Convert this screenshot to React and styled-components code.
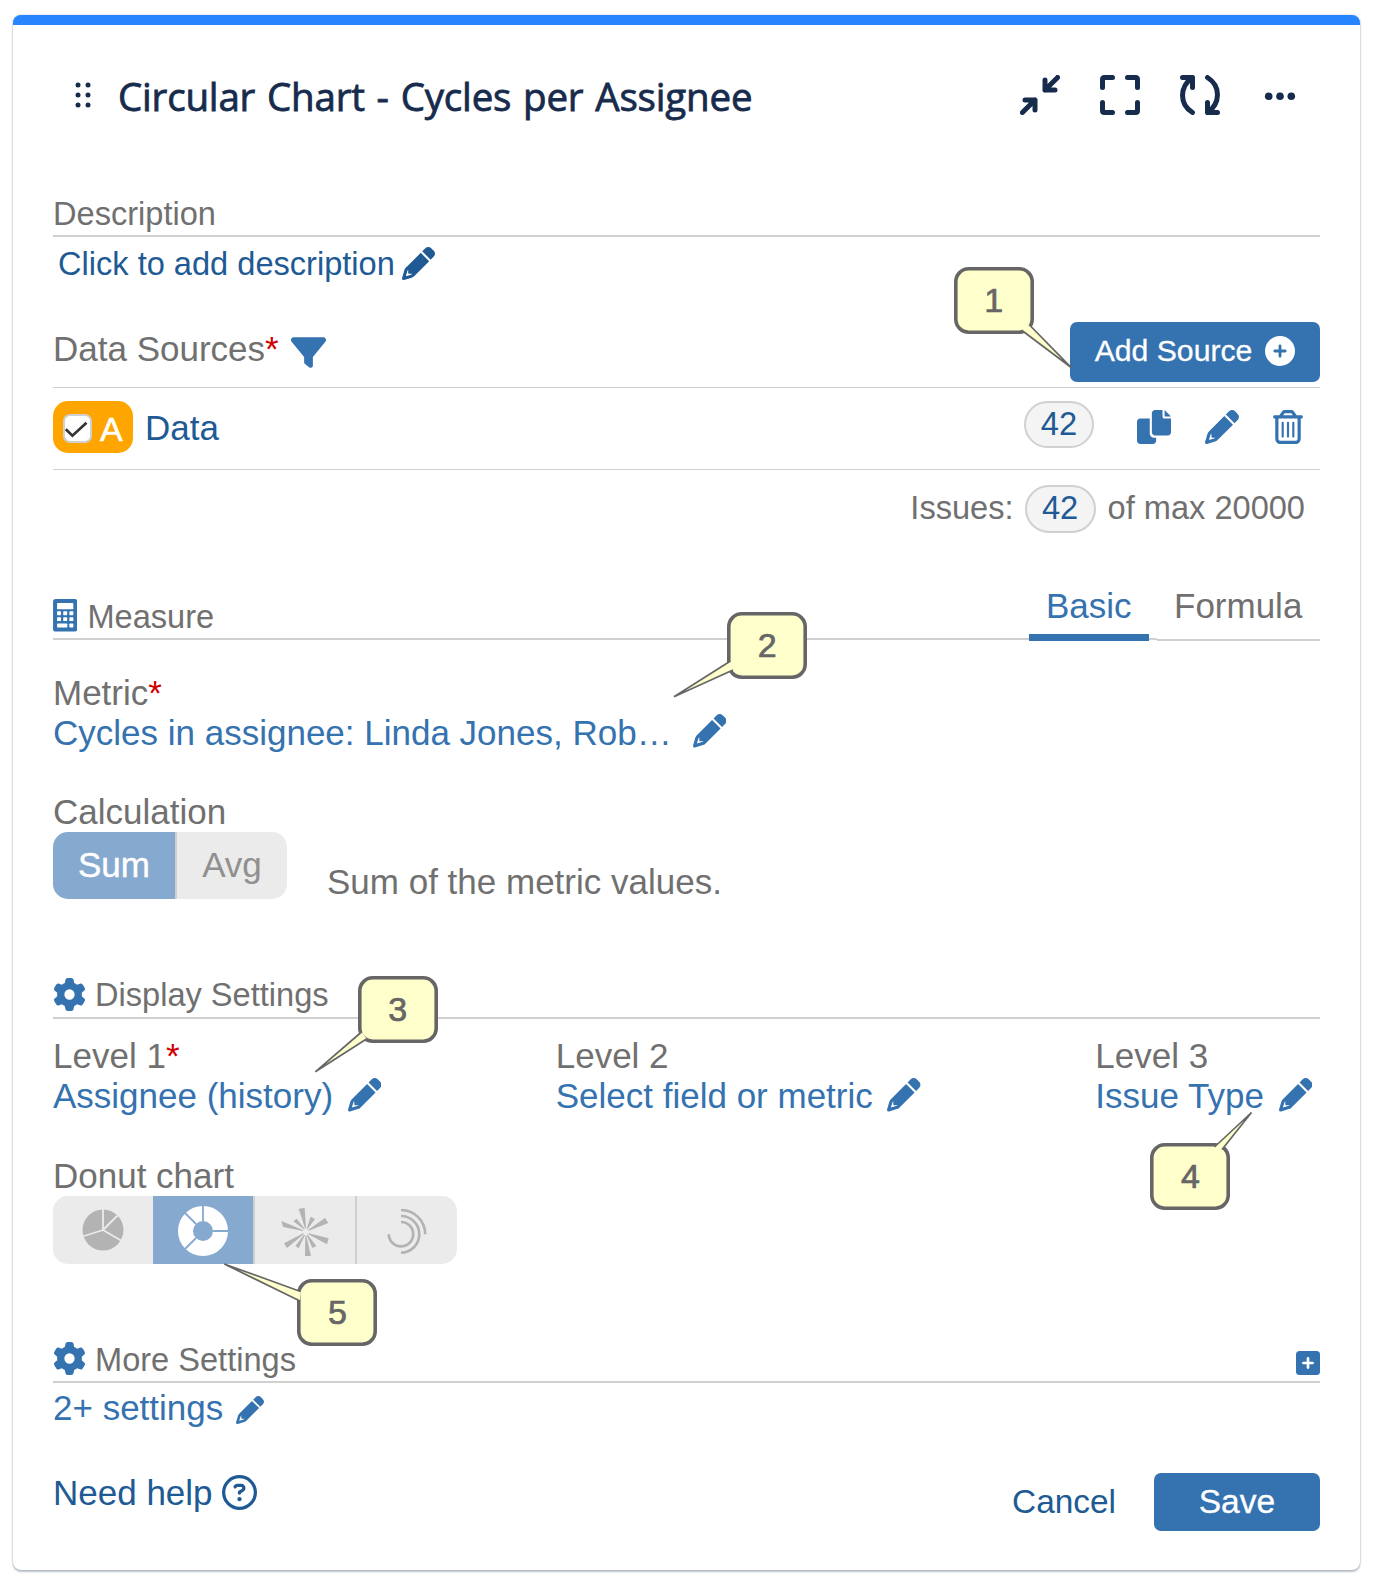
import React from "react"

// Libraries
import styled, { createGlobalStyle, css } from "styled-components"
import {
  FaCirclePlus,
  FaGear,
  FaRegCircleQuestion,
  FaRegTrashCan,
} from "react-icons/fa6"

const colors = {
  bar: "#2684ff",
  navy: "#172b4d",
  gray: "#707070",
  blue: "#3572b0",
  darkBlue: "#205a94",
  line: "#d0d0d0",
  red: "#d00000",
  orange: "#ffa500",
  segment: "#ebebeb",
  segmentActive: "#86a9cf",
  segmentIcon: "#b3b3b3",
  note: "#ffffcc",
  noteBorder: "#666666",
}

const GlobalStyle = createGlobalStyle`
  * {
    box-sizing: border-box;
  }

  body {
    margin: 0;
    background: #ffffff;
    font-family: "Liberation Sans", Arial, sans-serif;
    color: ${colors.gray};
  }

  svg {
    display: block;
    flex: none;
  }
`

const Page = styled.div`
  position: relative;
  height: 1586px;
  padding: 15px 13px 0;
  overflow: hidden;
`

const Card = styled.main`
  height: 1555px;
  padding: 0 40px;
  border-top: 10px solid ${colors.bar};
  border-radius: 8px;
  background: #ffffff;
  box-shadow: 0 2px 2px rgba(9, 30, 66, 0.25), 0 0 2px rgba(9, 30, 66, 0.31);
`

const Header = styled.header`
  display: flex;
  align-items: center;
  height: 169px;
  padding: 50px 20px 79px 22px;
  color: ${colors.navy};
`

const Title = styled.h1`
  flex: 1;
  margin: 2px 0 0 27px;
  font: 500 38.5px/40px "Open Sans", "Noto Sans", sans-serif;
  letter-spacing: -0.18px;
  word-spacing: 2px;
  white-space: nowrap;
  -webkit-text-stroke: 0.8px ${colors.navy};
`

const HeaderActions = styled.div`
  display: flex;
  gap: 40px;
`

const textStyles = css`
  font-size: ${({ $compact }) => ($compact ? "32.6px" : "35px")};
  line-height: ${({ $compact }) => ($compact ? "39px" : "40px")};
  white-space: nowrap;
`

const Label = styled.div`
  ${textStyles}
`

const Required = styled.span`
  color: ${colors.red};
`

const Link = styled.a`
  ${textStyles}
  display: flex;
  align-items: flex-start;
  color: ${({ $dark }) => ($dark ? colors.darkBlue : colors.blue)};

  svg {
    margin-top: ${({ $iconTop }) => $iconTop || 2}px;
    margin-left: ${({ $iconGap }) => $iconGap || 14.5}px;
  }
`

const SectionHead = styled.div`
  display: flex;
  align-items: flex-start;
  height: ${({ $height }) => $height}px;
  margin-top: ${({ $top }) => $top || 0}px;
  border-bottom: 2px solid ${colors.line};

  > svg {
    margin: ${({ $height }) => $height - 41}px 9px 0 0;
  }

  ${Label} {
    flex: 1;
  }
`

const Expander = styled.span`
  margin-top: 10.5px;
`

const DescriptionRow = styled.div`
  display: flex;
  margin: 7px 0 39px;
  padding-left: 5px;
`

const SourcesHead = styled.div`
  display: flex;
  align-items: flex-start;
  height: 66px;
  border-bottom: 1px solid ${colors.line};

  > ${Label} {
    margin: 7px 12px 0 0;
  }

  > svg {
    margin-top: 13px;
  }
`

const Button = styled.button`
  display: flex;
  align-items: center;
  justify-content: center;
  gap: 13px;
  width: ${({ $width }) => $width}px;
  height: ${({ $height }) => $height}px;
  margin-left: auto;
  padding: 0 0 ${({ $lift }) => $lift || 0}px;
  border: 0;
  border-radius: 7px;
  background: ${colors.blue};
  color: #ffffff;
  font-family: inherit;
  font-size: ${({ $size }) => $size}px;
  white-space: nowrap;
  -webkit-text-stroke: 0.3px #ffffff;
`

const SourceRow = styled.div`
  display: flex;
  align-items: flex-start;
  height: 82px;
  padding: 13px 15px 0 0;
  border-bottom: 1px solid ${colors.line};

  > a {
    margin: 7px auto 0 12px;
  }
`

const SourceTag = styled.div`
  display: flex;
  align-items: center;
  gap: 8px;
  width: 80px;
  height: 52px;
  padding-left: 10px;
  border-radius: 15px;
  background: ${colors.orange};
  color: #ffffff;
  font-size: 34px;
  line-height: 40px;
  -webkit-text-stroke: 0.5px #ffffff;
`

const Checkbox = styled.span`
  width: 29px;
  height: 29px;
  margin-top: 3px;
  border: 2px solid ${colors.line};
  border-radius: 7px;
  background: #ffffff;

  svg {
    margin: -2px;
  }
`

const TagLetter = styled.span`
  margin-top: 3px;
`

const Count = styled.span`
  width: ${({ $width }) => $width}px;
  height: ${({ $width }) => ($width > 70 ? 48 : 47)}px;
  border: 2px solid ${colors.line};
  border-radius: 24px;
  background: #f4f4f4;
  color: ${colors.darkBlue};
  font-size: 32.7px;
  line-height: 42px;
  text-align: center;
`

const SourceActions = styled.div`
  display: flex;
  gap: 34px;
  margin: 9px 0 0 43px;
  color: ${colors.blue};

  svg:last-child {
    margin-left: -2px;
  }
`

const IssuesRow = styled.div`
  display: flex;
  justify-content: flex-end;
  margin-top: 15px;
  padding-right: 15px;

  ${Label} {
    margin-top: 3px;
  }

  ${Count} {
    margin: 0 12px 0 11px;
  }
`

const MeasureRow = styled.div`
  display: flex;
  align-items: flex-start;
  height: 55px;
  margin: 53px 0 32px;
`

const MeasureTitle = styled.div`
  display: flex;
  flex: 1;
  height: 54px;
  padding-top: 11px;
  border-bottom: 2px solid ${colors.line};

  svg {
    margin: 2px 10px 0 0;
  }
`

const Tab = styled.div`
  ${textStyles}
  width: ${({ $active }) => ($active ? 120 : 163)}px;
  height: 55px;
  padding-left: 17px;
  border-bottom: ${({ $active }) =>
    $active ? `7px solid ${colors.blue}` : `2px solid ${colors.line}`};
  color: ${({ $active }) => ($active ? colors.blue : colors.gray)};
`

const TabGap = styled.div`
  width: 8px;
  height: 54px;
  border-bottom: 2px solid ${colors.line};
`

const Field = styled.div`
  margin-top: ${({ $top }) => $top || 0}px;
`

const CalculationRow = styled.div`
  display: flex;
  align-items: flex-start;
  height: 67px;

  > ${Label} {
    margin: 30px 0 0 40px;
  }
`

const Segments = styled.div`
  display: flex;
  width: max-content;
  height: ${({ $height }) => $height}px;
  border-radius: 15px;
  overflow: hidden;
`

const Segment = styled.div`
  display: flex;
  align-items: center;
  justify-content: center;
  box-sizing: content-box;
  width: ${({ $width }) => $width}px;
  padding-bottom: 2px;
  border-left: ${({ $divider }) => ($divider ? `2px solid ${colors.line}` : 0)};
  background: ${({ $active }) =>
    $active ? colors.segmentActive : colors.segment};
  color: ${({ $active }) => ($active ? "#ffffff" : "#909090")};
  font-size: 35px;
  -webkit-text-stroke: ${({ $active }) => ($active ? "0.4px #ffffff" : "0")};

  svg {
    margin-top: 4px;
  }
`

const Levels = styled.div`
  display: flex;
  justify-content: space-between;
  margin-top: 17px;
  padding-right: 8px;
`

const Footer = styled.footer`
  display: flex;
  align-items: flex-start;
  margin-top: 45px;
`

const Cancel = styled.a`
  margin: 9px 38px 0 auto;
  color: ${colors.darkBlue};
  font-size: 33.4px;
  line-height: 40px;

  & + ${Button} {
    margin-left: 0;
  }
`

const Note = styled.div`
  position: absolute;
  top: ${({ $y }) => $y}px;
  left: ${({ $x }) => $x}px;
  width: 80px;
  height: 67px;
  color: ${colors.noteBorder};
  font-size: 34px;
  line-height: 66px;
  text-align: center;
  -webkit-text-stroke: 0.7px ${colors.noteBorder};

  svg {
    position: absolute;
    inset: 0;
    overflow: visible;
  }

  span {
    position: relative;
  }
`

// Icons
const PencilIcon = ({ size = 33.5 }) => (
  <svg width={size} height={size} viewBox="0 0 512 512" fill="currentColor">
    <path d="M421.7 220.3L188.5 453.4L154.6 419.5L158.1 416H112C103.2 416 96 408.8 96 400V353.9L92.51 357.4C87.78 362.2 84.31 368 82.42 374.4L59.44 452.6L137.6 429.6C143.1 427.7 149.8 424.2 154.6 419.5L188.5 453.4C178.1 463.8 165.2 471.5 151.1 475.6L30.77 511C22.35 513.5 13.24 511.2 7.03 504.1C.82 498.8-1.5 489.7 .98 481.2L36.37 360.9C40.53 346.8 48.16 333.9 58.57 323.5L291.7 90.34L421.7 220.3zM492.7 58.75C517.7 83.74 517.7 124.3 492.7 149.3L444.3 197.7L314.3 67.72L362.7 19.32C387.7-5.68 428.3-5.68 453.3 19.32L492.7 58.75z" />
  </svg>
)

const CopyIcon = () => (
  <svg width="34" height="34" viewBox="0 0 512 512" fill="currentColor">
    <path d="M384 96L384 0h-112c-26.51 0-48 21.49-48 48v288c0 26.51 21.49 48 48 48H464c26.51 0 48-21.49 48-48V128h-95.1C398.4 128 384 113.6 384 96zM416 0v96h96L416 0zM192 352V128h-144c-26.51 0-48 21.49-48 48v288c0 26.51 21.49 48 48 48h192c26.51 0 48-21.49 48-48L288 416h-32C220.7 416 192 387.3 192 352z" />
  </svg>
)

const FilterIcon = () => (
  <svg width="35" height="35" viewBox="0 0 512 512" fill={colors.blue}>
    <path d="M3.85 54.87C10.47 40.9 24.54 32 40 32H472C487.5 32 501.5 40.9 508.1 54.87C514.8 68.84 512.7 85.37 502.1 97.33L320 320.9V448C320 460.1 313.2 471.2 302.3 476.6C291.5 482 278.5 480.9 268.8 473.6L204.8 425.6C196.7 419.6 192 410.1 192 400V320.9L9.04 97.33C-.75 85.37-2.77 68.84 3.85 54.87z" />
  </svg>
)

const CalculatorIcon = () => (
  <svg width="24.4" height="32.6" viewBox="0 0 73 98">
    <rect width="73" height="98" rx="8" fill={colors.blue} />
    <g fill="#ffffff">
      <rect x="12" y="12" width="49" height="19" rx="2" />
      {[37, 55].map(y =>
        [12, 30.5, 49].map(x => (
          <rect key={`${x}-${y}`} x={x} y={y} width="12" height="11.5" rx="2" />
        ))
      )}
      <rect x="12" y="74" width="31" height="11.5" rx="2" />
      <rect x="49" y="74" width="12" height="11.5" rx="2" />
    </g>
  </svg>
)

const PlusSquareIcon = () => (
  <svg width="24" height="24" viewBox="0 0 24 24">
    <rect width="24" height="24" rx="3.5" fill={colors.blue} />
    <path
      d="M12 7.4v9.2M7.4 12h9.2"
      stroke="#ffffff"
      strokeWidth="2.7"
      strokeLinecap="round"
    />
  </svg>
)

const DragIcon = () => (
  <svg width="16" height="26" viewBox="0 0 16 26" fill="currentColor">
    {[3, 13].map(x =>
      [3, 13, 23].map(y => <circle key={`${x}-${y}`} cx={x} cy={y} r="2.5" />)
    )}
  </svg>
)

const StrokeIcon = ({ d }) => (
  <svg
    width="40"
    height="40"
    viewBox="0 0 40 40"
    fill="none"
    stroke="currentColor"
    strokeWidth="5"
    strokeLinecap="round"
    strokeLinejoin="round"
  >
    <path d={d} />
  </svg>
)

const MoreIcon = () => (
  <svg width="40" height="40" viewBox="0 0 40 40" fill="currentColor">
    <circle cx="8.7" cy="21.3" r="3.8" />
    <circle cx="20" cy="21.3" r="3.8" />
    <circle cx="31.3" cy="21.3" r="3.8" />
  </svg>
)

const PieIcon = () => (
  <svg width="50" height="50" viewBox="0 0 50 50">
    <circle cx="25" cy="24" r="20.5" fill={colors.segmentIcon} />
    <path
      d="M25 24V3M25 24L39.5 9.5M25 24L43 34.5M25 24L4.5 30.5"
      stroke={colors.segment}
      strokeWidth="1.8"
    />
  </svg>
)

const DonutIcon = () => (
  <svg width="50" height="50" viewBox="0 0 50 50">
    <circle cx="25" cy="25" r="17.5" fill="none" stroke="#ffffff" strokeWidth="15" />
    <path
      d="M25 15V0M35 25H50M18 32L6 44M18 18L6 6"
      stroke={colors.segmentActive}
      strokeWidth="1.8"
    />
  </svg>
)

const BurstIcon = () => (
  <svg width="50" height="50" viewBox="-78 -77 150 150" fill={colors.segmentIcon}>
    <path d="M-22-69L-4-71L0-10L-3-10zM14-45L27-38L5-8L2-9zM57-41L67-26L8-3L7-6zM68 20L63 38L7 8L8 5zM31 43L19 49L2 10L5 9zM15 73L-3 75L-2 12L1 12zM-22 50L-32 43L-6 9L-3 10zM-57 49L-66 35L-8 5L-7 8zM-69-14L-74-32L-9-5L-8-2zM-38-31L-28-39L-4-9L-6-7z" />
  </svg>
)

const RadialIcon = () => (
  <svg width="50" height="50" viewBox="0 0 50 50" fill="none" stroke={colors.segmentIcon} strokeWidth="2.7">
    <path d="M19 4A24.2 24.2 0 0 1 43.2 28.2M19 10A18.3 18.3 0 0 1 19 46.6M19 16A12.2 12.2 0 1 1 6.8 28.2" />
  </svg>
)

// Numbered bubble, the tail is drawn from two points on the border to the tip
const Callout = ({ number, x, y, from, tip, to }) => (
  <Note $x={x} $y={y}>
    <svg width="80" height="67" viewBox="0 0 80 67" fill={colors.note} stroke={colors.noteBorder}>
      <rect x="1.8" y="1.8" width="76.4" height="63.4" rx="13" strokeWidth="3.6" />
      <polygon points={`${from} ${tip} ${to}`} stroke="none" />
      <polyline points={`${from} ${tip} ${to}`} strokeWidth="1.7" />
    </svg>
    <span>{number}</span>
  </Note>
)

const callouts = [
  { x: 953.6, y: 266.6, from: "68,63.5", tip: "117.5,100.8", to: "75,57.5" },
  { x: 727.3, y: 611.5, from: "3.5,49", tip: "-53,84.8", to: "6,58" },
  { x: 357.7, y: 976, from: "3.5,56", tip: "-42.7,95.8", to: "8.5,63" },
  { x: 1150.4, y: 1142.7, from: "64.5,4", tip: "101.5,-30.5", to: "72,6.5" },
  { x: 297.4, y: 1278.7, from: "3.5,12.5", tip: "-72.7,-15", to: "3,22" },
]

const App = () => (
  <>
    <GlobalStyle />
    <Page>
      <Card>
        <Header>
          <DragIcon />
          <Title>Circular Chart - Cycles per Assignee</Title>
          <HeaderActions>
            <StrokeIcon d="M2.4 37.6L15 25M5 25H15V35M37.6 2.4L25 15M25 5V15H35" />
            <StrokeIcon d="M2.5 12.5V4.5Q2.5 2.5 4.5 2.5H12.5M27.5 2.5H35.5Q37.5 2.5 37.5 4.5V12.5M37.5 27.5V35.5Q37.5 37.5 35.5 37.5H27.5M12.5 37.5H4.5Q2.5 37.5 2.5 35.5V27.5" />
            <StrokeIcon d="M2.5 2.5H12.5V12.5M12.5 2.5C-.8 12 -.8 29 12.5 37.5M37.5 37.5H27.5V27.5M27.5 37.5C40.8 28 40.8 11 27.5 2.5" />
            <MoreIcon />
          </HeaderActions>
        </Header>

        <SectionHead $height={43}>
          <Label $compact>Description</Label>
        </SectionHead>
        <DescriptionRow>
          <Link $compact $dark $iconTop={3} $iconGap={7}>
            Click to add description
            <PencilIcon size={33} />
          </Link>
        </DescriptionRow>

        <SourcesHead>
          <Label>
            Data Sources<Required>*</Required>
          </Label>
          <FilterIcon />
          <Button $width={250} $height={60} $size={30.2} $lift={2}>
            Add Source
            <FaCirclePlus size={30} />
          </Button>
        </SourcesHead>
        <SourceRow>
          <SourceTag>
            <Checkbox>
              <svg width="29" height="29" viewBox="0 0 29 29" fill="none">
                <path d="M2.8 15.3L9.4 21.7L23.5 8.7" stroke="#333333" strokeWidth="2.7" />
              </svg>
            </Checkbox>
            <TagLetter>A</TagLetter>
          </SourceTag>
          <Link $dark>Data</Link>
          <Count $width={70}>42</Count>
          <SourceActions>
            <CopyIcon />
            <PencilIcon size={34} />
            <FaRegTrashCan size={34} />
          </SourceActions>
        </SourceRow>
        <IssuesRow>
          <Label $compact>Issues:</Label>
          <Count $width={71}>42</Count>
          <Label $compact>of max 20000</Label>
        </IssuesRow>

        <MeasureRow>
          <MeasureTitle>
            <CalculatorIcon />
            <Label $compact>Measure</Label>
          </MeasureTitle>
          <Tab $active>Basic</Tab>
          <TabGap />
          <Tab>Formula</Tab>
        </MeasureRow>
        <Field>
          <Label>
            Metric<Required>*</Required>
          </Label>
          <Link $iconTop={1} $iconGap={21}>
            Cycles in assignee: Linda Jones, Rob…
            <PencilIcon />
          </Link>
        </Field>
        <Field $top={39}>
          <Label>Calculation</Label>
          <CalculationRow>
            <Segments $height={67}>
              <Segment $width={122} $active>
                Sum
              </Segment>
              <Segment $width={110} $divider>
                Avg
              </Segment>
            </Segments>
            <Label>Sum of the metric values.</Label>
          </CalculationRow>
        </Field>

        <SectionHead $height={44} $top={76}>
          <FaGear size={33} color={colors.blue} />
          <Label $compact>Display Settings</Label>
        </SectionHead>
        <Levels>
          <Field>
            <Label>
              Level 1<Required>*</Required>
            </Label>
            <Link>
              Assignee (history)
              <PencilIcon />
            </Link>
          </Field>
          <Field>
            <Label>Level 2</Label>
            <Link>
              Select field or metric
              <PencilIcon />
            </Link>
          </Field>
          <Field>
            <Label>Level 3</Label>
            <Link>
              Issue Type
              <PencilIcon />
            </Link>
          </Field>
        </Levels>
        <Field $top={40}>
          <Label>Donut chart</Label>
          <Segments $height={68}>
            <Segment $width={100}>
              <PieIcon />
            </Segment>
            <Segment $width={100} $active>
              <DonutIcon />
            </Segment>
            <Segment $width={100} $divider>
              <BurstIcon />
            </Segment>
            <Segment $width={100} $divider>
              <RadialIcon />
            </Segment>
          </Segments>
        </Field>

        <SectionHead $height={43} $top={76}>
          <FaGear size={33} color={colors.blue} />
          <Label $compact>More Settings</Label>
          <Expander>
            <PlusSquareIcon />
          </Expander>
        </SectionHead>
        <Field $top={5}>
          <Link $iconTop={8} $iconGap={13}>
            2+ settings
            <PencilIcon size={28} />
          </Link>
        </Field>

        <Footer>
          <Link $dark $iconGap={9}>
            Need help
            <FaRegCircleQuestion size={35} />
          </Link>
          <Cancel>Cancel</Cancel>
          <Button $width={166} $height={57.5} $size={33.6}>
            Save
          </Button>
        </Footer>
      </Card>

      {callouts.map((callout, index) => (
        <Callout key={index} number={index + 1} {...callout} />
      ))}
    </Page>
  </>
)

export default App
